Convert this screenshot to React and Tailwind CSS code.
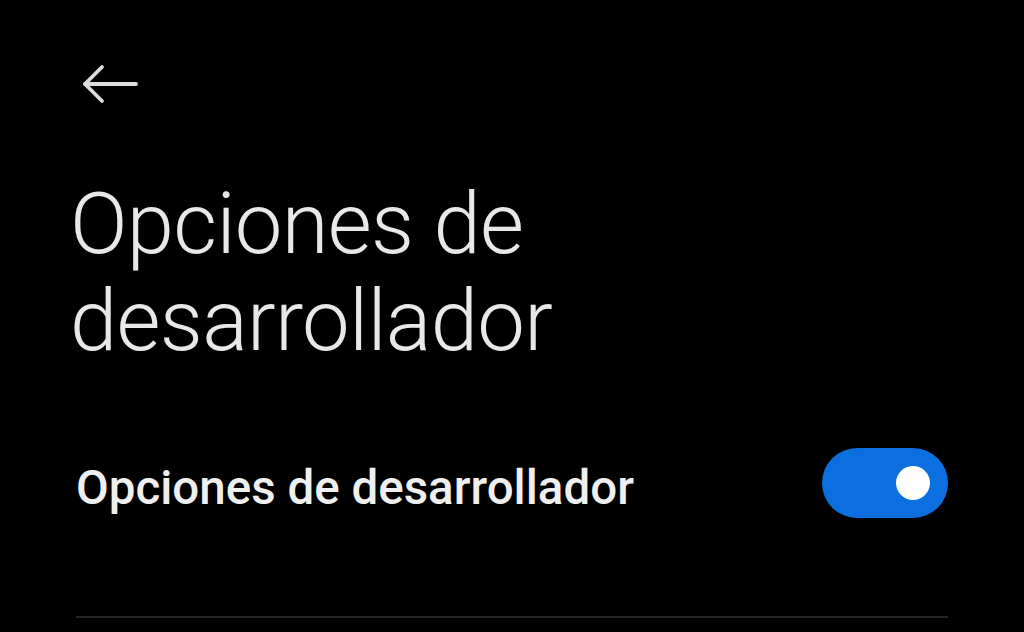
import React, { useState } from 'react';

const BackArrow = () => (
  <svg width="56" height="40" viewBox="0 0 56 40" fill="none" stroke="#dcdcdc" strokeWidth="3.8" strokeLinecap="round" strokeLinejoin="round">
    <path d="M54 20H3" />
    <path d="M20 3L3 20L20 37" />
  </svg>
);

export default function App() {
  const [enabled, setEnabled] = useState(true);

  return (
    <div className="h-[632px] w-[1024px] overflow-hidden bg-black font-['Roboto','Liberation_Sans',sans-serif]">
      <div className="flex flex-col px-[76px] pt-[64px]">
        <button className="ml-[6px] flex h-[40px] w-[56px] items-center">
          <BackArrow />
        </button>

        <h1 className="-ml-[6px] mt-[72px] text-[85px] font-light leading-[97px] tracking-[-0.7px] text-[#e8e8e8]">
          Opciones de
          <br />
          desarrollador
        </h1>

        <div className="mt-[78px] flex items-center justify-between">
          <span className="pt-[10px] text-[47.5px] font-medium leading-[56px] text-[#efefef]">
            Opciones de desarrollador
          </span>
          <button
            onClick={() => setEnabled(!enabled)}
            className={`flex h-[70px] w-[126px] items-center rounded-full px-[18px] ${
              enabled ? 'justify-end bg-[#0b6fe0]' : 'justify-start bg-[#3a3a3a]'
            }`}
          >
            <span className="h-[34px] w-[34px] rounded-full bg-white" />
          </button>
        </div>

        <div className="mt-[98px] h-[2px] w-full bg-[#262626]" />
      </div>
    </div>
  );
}
